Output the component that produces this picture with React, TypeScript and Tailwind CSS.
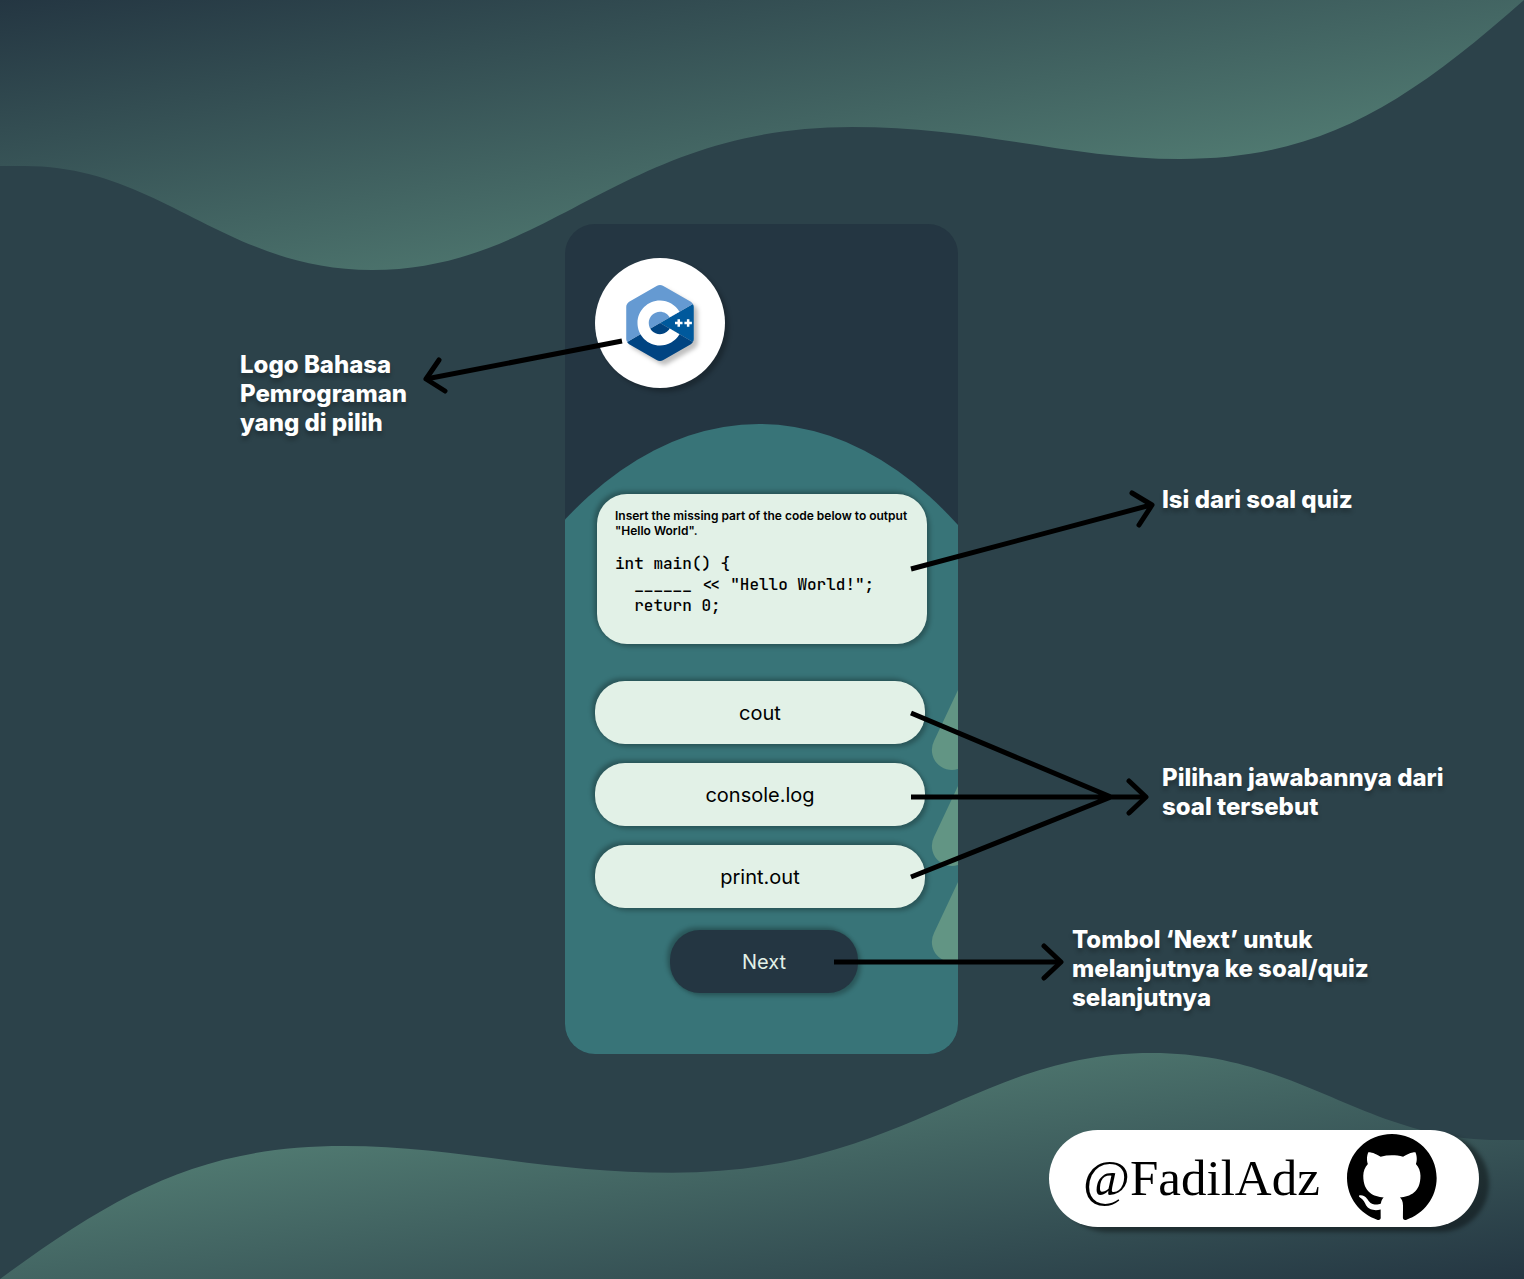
import React from "react";

const WAVE =
  "M0 0V166H25C160 166 225 270 372 270C550 270 620 127 852 127C980 127 1070 159 1180 159C1320 159 1405 105 1524 0Z";

const ANSWERS = ["cout", "console.log", "print.out"];

const RAISED = "shadow-[3px_3px_4px_rgba(0,0,0,0.25),-3px_-3px_4px_rgba(0,0,0,0.25)]";

function Wave({ id, className }: { id: string; className: string }) {
  return (
    <svg className={className} viewBox="0 0 1524 270" preserveAspectRatio="none" aria-hidden="true">
      <defs>
        <linearGradient id={id} x1="0" y1="0" x2="1" y2="1">
          <stop offset="0" stopColor="#243642" />
          <stop offset="1" stopColor="#629584" />
        </linearGradient>
      </defs>
      <path d={WAVE} fill={`url(#${id})`} />
    </svg>
  );
}

function CppLogo() {
  return (
    <svg
      className="h-[76px] w-[68px] drop-shadow-[4px_4px_2px_rgba(0,0,0,0.25)]"
      viewBox="0 0 306 344.35"
      role="img"
      aria-label="C++"
    >
      <path fill="#00599C" d="M302.107,258.262c2.401-4.159,3.893-8.845,3.893-13.053V99.14c0-4.208-1.49-8.893-3.892-13.052L153,172.175L302.107,258.262z" />
      <path fill="#004482" d="M166.25,341.193l126.5-73.034c3.644-2.104,6.956-5.737,9.357-9.897L153,172.175L3.893,258.263c2.401,4.159,5.714,7.793,9.357,9.896l126.5,73.034C147.037,345.401,158.963,345.401,166.25,341.193z" />
      <path fill="#659AD2" d="M302.108,86.087c-2.402-4.16-5.715-7.793-9.358-9.897L166.25,3.156c-7.287-4.208-19.213-4.208-26.5,0L13.25,76.19C5.962,80.397,0,90.725,0,99.14v146.069c0,4.208,1.491,8.894,3.893,13.053L153,172.175L302.108,86.087z" />
      <path fill="#fff" d="M153,274.175c-56.243,0-102-45.757-102-102s45.757-102,102-102c36.292,0,70.139,19.53,88.331,50.968l-44.143,25.544c-9.105-15.736-26.038-25.512-44.188-25.512c-28.122,0-51,22.878-51,51c0,28.121,22.878,51,51,51c18.152,0,35.085-9.776,44.191-25.515l44.143,25.543C223.142,254.644,189.294,274.175,153,274.175z" />
      <path fill="#fff" d="M255 166.508H243.666V155.175H232.334V166.508H221V177.841H232.334V189.175H243.666V177.841H255Z" />
      <path fill="#fff" d="M297.5 166.508H286.166V155.175H274.834V166.508H263.5V177.841H274.834V189.175H286.166V177.841H297.5Z" />
    </svg>
  );
}

function GithubMark() {
  return (
    <svg className="mb-[3px] h-[86px] w-[90px]" viewBox="0 0 98 96" preserveAspectRatio="none" role="img" aria-label="GitHub">
      <path
        fill="#000"
        fillRule="evenodd"
        d="M48.854 0C21.839 0 0 22 0 49.217c0 21.756 13.993 40.172 33.405 46.69 2.427.49 3.316-1.059 3.316-2.362 0-1.141-.08-5.052-.08-9.127-13.59 2.934-16.42-5.867-16.42-5.867-2.184-5.704-5.42-7.17-5.42-7.17-4.448-3.015.324-3.015.324-3.015 4.934.326 7.523 5.052 7.523 5.052 4.367 7.496 11.404 5.378 14.235 4.074.404-3.178 1.699-5.378 3.074-6.6-10.839-1.141-22.243-5.378-22.243-24.283 0-5.378 1.94-9.778 5.014-13.2-.485-1.222-2.184-6.275.486-13.038 0 0 4.125-1.304 13.426 5.052a46.97 46.97 0 0 1 12.214-1.63c4.125 0 8.33.571 12.213 1.63 9.302-6.356 13.427-5.052 13.427-5.052 2.67 6.763.97 11.816.485 13.038 3.155 3.422 5.015 7.822 5.015 13.2 0 18.905-11.404 23.06-22.324 24.283 1.78 1.548 3.316 4.481 3.316 9.126 0 6.6-.08 11.897-.08 13.526 0 1.304.89 2.853 3.316 2.364 19.412-6.52 33.405-24.935 33.405-46.691C97.707 22 75.788 0 48.854 0z"
      />
    </svg>
  );
}

/* Arrows share the phone's origin, so they stay attached to it at any window width. */
function Arrows() {
  return (
    <svg
      className="pointer-events-none absolute top-0 left-0 h-full w-full overflow-visible"
      fill="none"
      stroke="#000"
      strokeWidth="5"
      strokeLinejoin="round"
      aria-hidden="true"
    >
      <path d="M57 117L-139 155M346 345L586 281M346 489L546 573M346 573H580M346 653L546 573M269 738H495" />
      <path strokeLinecap="round" d="M-126 136L-139 155L-120 167M567 269L587 281L574 301M564 557L581 573L564 589M479 722L496 738L479 754" />
    </svg>
  );
}

function Note({ className, children }: { className: string; children: React.ReactNode }) {
  return (
    <p className={`text-2xl leading-[29px] font-extrabold text-white [text-shadow:0_4px_4px_rgba(0,0,0,0.25)] ${className}`}>
      {children}
    </p>
  );
}

function Phone() {
  return (
    <div className="relative h-full">
      <section className="relative flex h-full flex-col overflow-hidden rounded-[30px] bg-[#243642] pt-[34px]">
        <div className="absolute top-[200px] left-[-168px] h-[1228px] w-[724px] rounded-[50%] bg-[#387478]" />
        <svg className="absolute top-[464px] right-0 h-[274px] w-[28px]" viewBox="0 0 28 274" fill="#629584" aria-hidden="true">
          {[0, 96, 192].map((y) => (
            <path key={y} transform={`translate(0 ${y})`} d="M28 2L4 53A20 20 0 0 0 28 81Z" />
          ))}
        </svg>

        <div className="relative ml-[30px] flex size-[130px] items-center justify-center rounded-full bg-white shadow-[4px_4px_4px_rgba(0,0,0,0.25)]">
          <CppLogo />
        </div>

        <div className={`relative mx-8 mt-[106px] h-[150px] w-[330px] rounded-[30px] bg-[#E2F1E7] px-[18px] pt-[14px] text-black ${RAISED}`}>
          <h1 className="text-xs leading-[15px] font-semibold">
            Insert the missing part of the code below to output "Hello World".
          </h1>
          <pre className="mt-[15px] font-['JetBrains_Mono','DejaVu_Sans_Mono',monospace] text-base leading-[21px] font-medium">
            {'int main() {\n  ______ << "Hello World!";\n  return 0;'}
          </pre>
        </div>

        <div className="relative mt-[37px] flex flex-col gap-[19px] pl-[30px]">
          {ANSWERS.map((answer) => (
            <button key={answer} type="button" className={`h-[63px] w-[330px] rounded-[30px] bg-[#E2F1E7] text-xl text-black ${RAISED}`}>
              {answer}
            </button>
          ))}
        </div>

        <button type="button" className={`relative mt-[22px] ml-[105px] h-[63px] w-[188px] rounded-[30px] bg-[#243642] text-xl text-[#E2F1E7] ${RAISED}`}>
          Next
        </button>
      </section>
      <Arrows />
    </div>
  );
}

export default function App() {
  return (
    <div className="relative min-h-screen overflow-hidden bg-[#2C424A] font-['Inter',sans-serif]">
      <Wave id="waveTop" className="absolute top-0 left-0 h-[270px] w-full" />
      <Wave id="waveBottom" className="absolute bottom-0 left-0 h-[226px] w-full rotate-180" />

      <main className="relative grid h-[1054px] grid-cols-[1fr_393px_1fr] pt-[224px] pr-px">
        <div className="flex justify-end pt-[126px]">
          <Note className="mr-[145px] w-[180px]">Logo Bahasa Pemrograman yang di pilih</Note>
        </div>
        <Phone />
        <div className="pt-[261px]">
          <Note className="ml-[204px]">Isi dari soal quiz</Note>
          <Note className="mt-[249px] ml-[204px] w-[300px]">Pilihan jawabannya dari soal tersebut</Note>
          <Note className="mt-[104px] ml-[114px] w-[320px]">Tombol ‘Next’ untuk melanjutnya ke soal/quiz selanjutnya</Note>
        </div>
      </main>

      <footer className="relative flex justify-end pt-[76px] pr-[45px] pb-[52px]">
        <a
          href="https://github.com/FadilAdz"
          className="flex h-[97px] w-[430px] items-center justify-between rounded-full bg-white pr-[42px] pl-[34px] text-black shadow-[10px_5px_4px_rgba(0,0,0,0.4)]"
        >
          <span className="font-['Liberation_Serif',serif] text-[51px]">@FadilAdz</span>
          <GithubMark />
        </a>
      </footer>
    </div>
  );
}
